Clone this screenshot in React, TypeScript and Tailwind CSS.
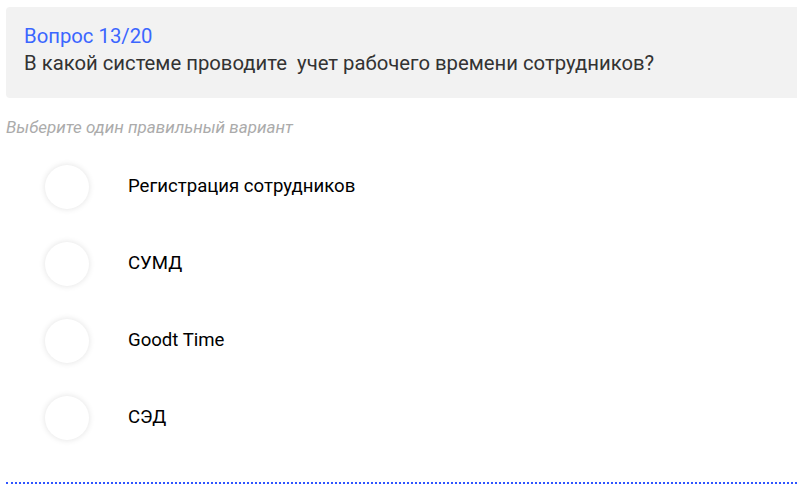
const options = ['Регистрация сотрудников', 'СУМД', 'Goodt Time', 'СЭД']

export default function App() {
  return (
    <div className="min-h-screen bg-white pl-[6px] pt-[7px] font-['Roboto',sans-serif]">
      <div className="rounded-l-[4px] bg-[#f2f2f2] pl-[18px] pt-[17px] pb-[23px]">
        <div className="text-[20.3px] leading-[24px] text-[#3b66ff]">Вопрос 13/20</div>
        <div className="mt-[3px] whitespace-pre text-[20.3px] leading-[24px] text-[#333333]">
          В какой системе проводите  учет рабочего времени сотрудников?
        </div>
      </div>

      <div className="mt-[19px] text-[17px] leading-[20px] italic text-[#ababab]">
        Выберите один правильный вариант
      </div>

      <div className="mt-[28px] flex flex-col gap-[33px] pl-[39px]">
        {options.map((opt) => (
          <label key={opt} className="flex items-center">
            <span className="h-[44px] w-[44px] shrink-0 rounded-full bg-white shadow-[0_0_6px_rgba(0,0,0,0.12)]" />
            <span className="ml-[39px] text-[18.6px] text-black">{opt}</span>
          </label>
        ))}
      </div>

      <div className="mt-[42px] border-b-2 border-dotted border-[#2f55ff]" />
    </div>
  )
}
